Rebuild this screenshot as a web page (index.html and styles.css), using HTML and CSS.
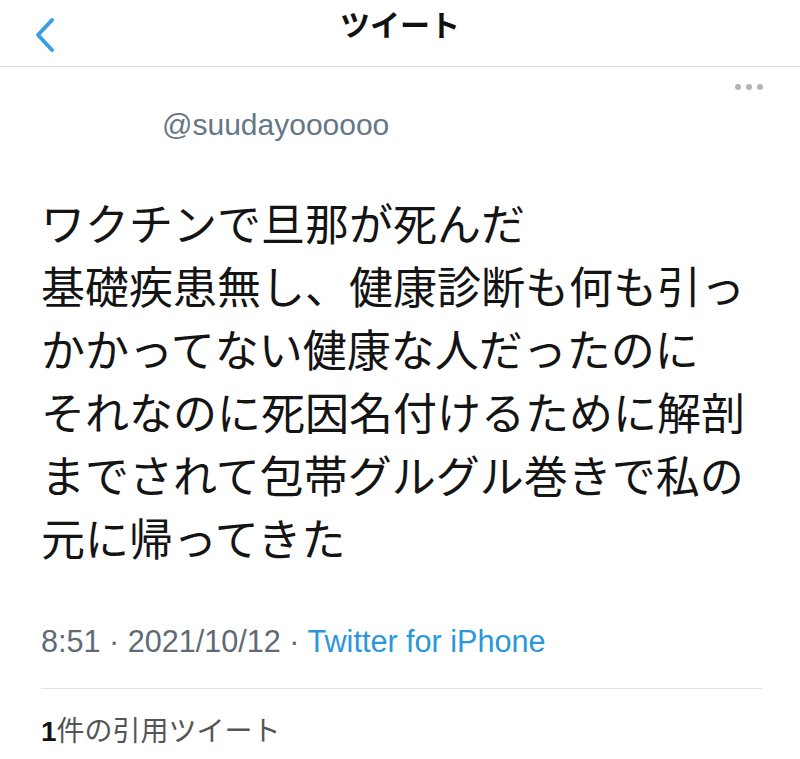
FILE: index.html
```html
<!DOCTYPE html>
<html lang="ja">
<head>
    <meta charset="UTF-8">
    <meta name="viewport" content="width=device-width, initial-scale=1.0">
    <title>ツイート</title>
    <link rel="stylesheet" href="styles.css">
</head>
<body>
    <div class="nav-bar">
        <div class="back">
            <svg width="24" height="36" viewBox="0 0 24 36">
                <path d="M19 3 L5 18 L19 33" fill="none" stroke="#3b9ee3" stroke-width="4" stroke-linecap="round" stroke-linejoin="round"/>
            </svg>
        </div>
        <h1 class="nav-title">ツイート</h1>
        <div></div>
    </div>

    <div class="tweet">
        <div class="tweet-head">
            <span class="handle">@suudayoooooo</span>
            <span class="more"><i></i><i></i><i></i></span>
        </div>

        <p class="tweet-text">ワクチンで旦那が死んだ<br>基礎疾患無し、健康診断も何も引っ<br>かかってない健康な人だったのに<br>それなのに死因名付けるために解剖<br>までされて包帯グルグル巻きで私の<br>元に帰ってきた</p>

        <div class="meta">8:51 · 2021/10/12 · <a href="#" class="source">Twitter for iPhone</a></div>

        <div class="quotes"><b>1</b>件の引用ツイート</div>
    </div>
</body>
</html>
```

FILE: styles.css
```css
body {
    margin: 0;
    background: #fff;
    font-family: "Liberation Sans", "Noto Sans CJK JP", sans-serif;
    color: #111;
}
.nav-bar {
    display: grid;
    grid-template-columns: 120px 1fr 120px;
    align-items: center;
    height: 66px;
    border-bottom: 1px solid #dcdcdc;
}
.back {
    padding-left: 33px;
    padding-top: 4px;
    display: flex;
    align-items: center;
}
.nav-title {
    margin: 0;
    text-align: center;
    font-family: "Noto Sans CJK JP", sans-serif;
    font-size: 30px;
    font-weight: 700;
    padding-bottom: 20px;
}
.tweet {
    padding: 0 37px 0 41px;
}
.tweet-head {
    display: flex;
    justify-content: space-between;
    align-items: flex-start;
    padding-left: 121px;
}
.handle {
    margin-top: 41px;
    font-size: 30px;
    color: #657786;
}
.more {
    display: flex;
    gap: 5px;
    margin-top: 17px;
}
.more i {
    width: 6px;
    height: 6px;
    border-radius: 50%;
    background: #b3b3b3;
}
.tweet-text {
    margin: 49px 0 0;
    font-family: "Noto Sans CJK JP", sans-serif;
    font-size: 44px;
    line-height: 63px;
    white-space: nowrap;
    color: #141414;
}
.meta {
    margin-top: 55px;
    padding-bottom: 29px;
    border-bottom: 1px solid #e1e1e1;
    font-size: 30.6px;
    color: #5e6a75;
}
.source {
    color: #2a98d8;
    text-decoration: none;
}
.quotes {
    margin-top: 20px;
    font-family: "Noto Sans CJK JP", sans-serif;
    font-size: 28px;
    color: #555;
}
.quotes b {
    font-family: "Liberation Sans", sans-serif;
    color: #111;
}
```
